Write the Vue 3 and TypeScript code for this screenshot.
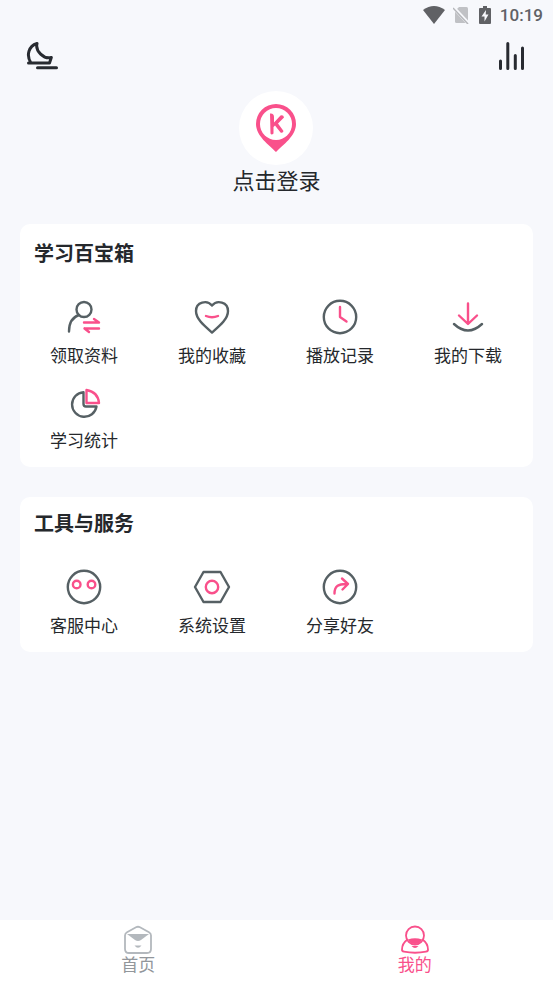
<script setup lang="ts">
import { ref } from 'vue'

interface Entry {
  icon: string
  label: string
}

const studyEntries: Entry[] = [
  { icon: 'materials', label: '领取资料' },
  { icon: 'favorites', label: '我的收藏' },
  { icon: 'history', label: '播放记录' },
  { icon: 'downloads', label: '我的下载' },
  { icon: 'statistics', label: '学习统计' },
]

const serviceEntries: Entry[] = [
  { icon: 'support', label: '客服中心' },
  { icon: 'settings', label: '系统设置' },
  { icon: 'share', label: '分享好友' },
]

const sections = [
  { id: 'study', title: '学习百宝箱', entries: studyEntries },
  { id: 'service', title: '工具与服务', entries: serviceEntries },
]

const activeTab = ref<'home' | 'mine'>('mine')
</script>

<template>
  <div class="page">
    <div class="status-bar">
      <svg class="wifi" width="22" height="18" viewBox="0 0 22 18">
        <path d="M0 4Q11-4 22 4L11 18Z" fill="#606165" />
      </svg>
      <svg class="sim" width="16" height="18" viewBox="0 0 16 18">
        <path d="M6 1h7.500a1.500 1.500 0 0 1 1.500 1.500V17H3.500A1.500 1.500 0 0 1 2 15.500V5Z" fill="#c0c1c5" />
        <path d="M0 1 16 18" stroke="#f7f8fc" stroke-width="3.500" />
        <path d="M0 2 15 18" stroke="#b5b6ba" stroke-width="1.500" />
      </svg>
      <svg class="battery" width="12" height="18" viewBox="0 0 12 18">
        <path d="M4 0h4v2h3q1 0 1 1v14q0 1-1 1H1q-1 0-1-1V3q0-1 1-1h3Z" fill="#606165" />
        <path d="M7 4 2.500 10.500H5.500V15.500L9.500 8.500H6.700Z" fill="#f7f8fc" />
      </svg>
      <span class="time">10:19</span>
    </div>

    <header class="toolbar">
      <button class="icon-button" type="button" aria-label="夜间模式">
        <svg width="32" height="30" viewBox="0 0 32 30" fill="none" stroke="#282b31" stroke-width="3" stroke-linecap="round" stroke-linejoin="round">
          <path d="M2.500 22H23.500L25.300 16.500C18 18.500 9 10 11 2.500C2.500 5 0 14.500 5 22M11.500 26.800H30.500" />
        </svg>
      </button>
      <button class="icon-button" type="button" aria-label="播放列表">
        <svg width="28" height="30" viewBox="0 0 28 30" fill="none" stroke="#282b31" stroke-width="3" stroke-linecap="round">
          <path d="M2.500 20v7.500M9.800 2.500v25M17.300 14.500v13M24.500 7v20.500" />
        </svg>
      </button>
    </header>

    <main class="content">
      <button class="profile" type="button">
        <span class="avatar">
          <svg width="40" height="48" viewBox="0 0 40 48">
            <path d="M20 0A20 20 0 0 0 0 20C0 32 13 41 20 48C27 41 40 32 40 20A20 20 0 0 0 20 0Z" fill="#f9508b" />
            <circle cx="20" cy="20" r="16" fill="#fff" />
            <path d="M14 9.500Q18 9 18 13V18.500L24.500 11.500Q27.500 10.500 28 13.500L22 19.500 27.500 27Q27 29.500 24.500 28.500L19 21.500 17.500 23V29.500Q15.500 31.500 14.500 29.500Z" fill="#f9508b" />
          </svg>
        </span>
        <span class="login">点击登录</span>
      </button>

      <section v-for="section in sections" :key="section.id" class="card" :class="section.id">
        <h2>{{ section.title }}</h2>
        <div class="grid">
          <button v-for="entry in section.entries" :key="entry.icon" class="entry" type="button">
            <svg class="entry-icon" width="40" height="40" viewBox="0 0 40 40">
              <template v-if="entry.icon === 'materials'">
                <circle class="dark" cx="20" cy="12.500" r="7.500" />
                <path class="dark" d="M15 18C9 20 5 26 5 34.500" />
                <path class="pink" d="M20 25.500H35L30 22M35 31.500H20.500M20.500 31.500 25 35" />
              </template>
              <template v-else-if="entry.icon === 'favorites'">
                <path class="dark" d="M20 35.500C12 28.500 4 22 4 14C4 5 15 2.500 20 8.500C25 2.500 36 5 36 14C36 22 28 28.500 20 35.500Z" />
                <path class="pink" d="M14 19Q20 21.500 26 19" />
              </template>
              <template v-else-if="entry.icon === 'history'">
                <circle class="dark" cx="20" cy="20" r="16.200" />
                <path class="pink" d="M20 10V20L26.500 24.500" />
              </template>
              <template v-else-if="entry.icon === 'downloads'">
                <path class="pink" d="M20 6.500V26M11 18.500 20 27 29 18.500" />
                <path class="dark" d="M6 27Q20 40 34 27" />
              </template>
              <template v-else-if="entry.icon === 'statistics'">
                <path class="dark" d="M19.500 10.200A12.300 12.300 0 1 0 32.500 24.500H22Q19.500 24.500 19.500 22Z" />
                <path class="pink" d="M22.500 8V21H35Q34 10 22.500 8Z" />
              </template>
              <template v-else-if="entry.icon === 'support'">
                <circle class="dark" cx="20" cy="20" r="16.200" />
                <circle class="pink" cx="12.700" cy="17.500" r="3.800" />
                <circle class="pink" cx="27.500" cy="17.500" r="3.800" />
              </template>
              <template v-else-if="entry.icon === 'settings'">
                <path class="dark" d="M11.500 5H28.500L37 20 28.500 35H11.500L3 20Z" />
                <circle class="pink" cx="20" cy="20" r="6.200" />
              </template>
              <template v-else>
                <circle class="dark" cx="20" cy="20" r="16.200" />
                <path class="pink" d="M14.500 26.500C14.500 19 18.500 16.500 27.500 17M22 11.500 28 17 22.500 22.500" />
              </template>
            </svg>
            <span class="entry-label">{{ entry.label }}</span>
          </button>
        </div>
      </section>
    </main>

    <nav class="tabs">
      <button type="button" :class="{ active: activeTab === 'home' }" @click="activeTab = 'home'">
        <svg width="30" height="30" viewBox="0 0 30 30" fill="none" stroke="currentColor" stroke-width="1.800" stroke-linecap="round" stroke-linejoin="round">
          <path d="M13 2.300Q15 1.200 17 2.300L26 7.300Q28 8.500 28 10.500V24Q28 28 24 28H6Q2 28 2 24V10.500Q2 8.500 4 7.300Z" />
          <path d="M4 9H26L18 15Q15 17 12 15Z" fill="currentColor" stroke="none" />
          <path d="M11.500 20.500H18.500Q15 25 11.500 20.500Z" fill="currentColor" stroke="none" />
        </svg>
        <span>首页</span>
      </button>
      <button type="button" :class="{ active: activeTab === 'mine' }" @click="activeTab = 'mine'">
        <svg width="30" height="30" viewBox="0 0 30 30" fill="none" stroke="currentColor" stroke-width="1.800" stroke-linecap="round" stroke-linejoin="round">
          <circle cx="15" cy="10.500" r="9" />
          <path d="M7.500 14.500C4 17 2 20.500 2 24.500Q1.800 26.300 4 26.700Q15 28.800 26 26.700Q28.200 26.300 28 24.500C28 20.500 26 17 22.500 14.500" />
          <path d="M8 14.500Q15 12 22 14.500Q20 19 15 19Q10 19 8 14.500Z" fill="currentColor" stroke="none" />
          <path d="M11.500 21H18.500Q15 25 11.500 21Z" fill="currentColor" stroke="none" />
        </svg>
        <span>我的</span>
      </button>
    </nav>
  </div>
</template>

<style>
body {
  margin: 0;
  background: #f7f8fc;
}
</style>

<style scoped>
.page {
  display: flex;
  flex-direction: column;
  min-height: 100vh;
  background: #f7f8fc;
  color: #25282c;
  font-family: "Noto Sans CJK SC", sans-serif;
}

button {
  margin: 0;
  padding: 0;
  border: 0;
  background: none;
  color: inherit;
  font: inherit;
  cursor: pointer;
}

svg {
  display: block;
}

.status-bar {
  display: flex;
  align-items: center;
  justify-content: flex-end;
  height: 30px;
  padding-right: 10px;
}

.sim {
  margin-left: 8px;
}

.battery {
  margin-left: 10px;
}

.time {
  margin-left: 9px;
  color: #606165;
  font-family: Roboto, sans-serif;
  font-size: 17px;
  font-weight: 500;
  line-height: 30px;
}

.toolbar {
  display: flex;
  align-items: center;
  justify-content: space-between;
  height: 52px;
  padding: 0 27px 0 26px;
}

.content {
  display: flex;
  flex-direction: column;
  padding: 9px 20px 30px;
}

.profile {
  display: flex;
  flex-direction: column;
  align-items: center;
  align-self: center;
  margin-bottom: 31px;
}

.avatar {
  display: flex;
  align-items: center;
  justify-content: center;
  width: 74px;
  height: 74px;
  border-radius: 50%;
  background: #fff;
}

.login {
  font-size: 22px;
  line-height: 28px;
}

.card {
  border-radius: 10px;
  background: #fff;
}

.study {
  padding: 14px 0 15px;
}

.service {
  margin-top: 30px;
  padding: 11px 0 15px;
}

h2 {
  margin: 0 0 29px;
  padding-left: 14px;
  font-size: 20px;
  font-weight: 700;
  line-height: 30px;
}

.grid {
  display: grid;
  grid-template-columns: repeat(4, 1fr);
  row-gap: 15px;
  padding-right: 1px;
}

.entry {
  display: flex;
  flex-direction: column;
  align-items: center;
  gap: 6px;
}

.entry-icon {
  fill: none;
  stroke-width: 2.4;
  stroke-linecap: round;
  stroke-linejoin: round;
}

.dark {
  stroke: #566064;
}

.pink {
  stroke: #f9508b;
}

.entry-label {
  font-size: 17px;
  line-height: 24px;
}

.tabs {
  display: grid;
  grid-template-columns: 1fr 1fr;
  margin-top: auto;
  background: #fff;
}

.tabs button {
  display: flex;
  flex-direction: column;
  align-items: center;
  padding: 5px 0 10px;
  color: #b3b8bd;
  font-size: 17px;
  line-height: 18px;
}

.tabs span {
  color: #92969b;
}

.tabs .active,
.tabs .active span {
  color: #f9508b;
}
</style>
